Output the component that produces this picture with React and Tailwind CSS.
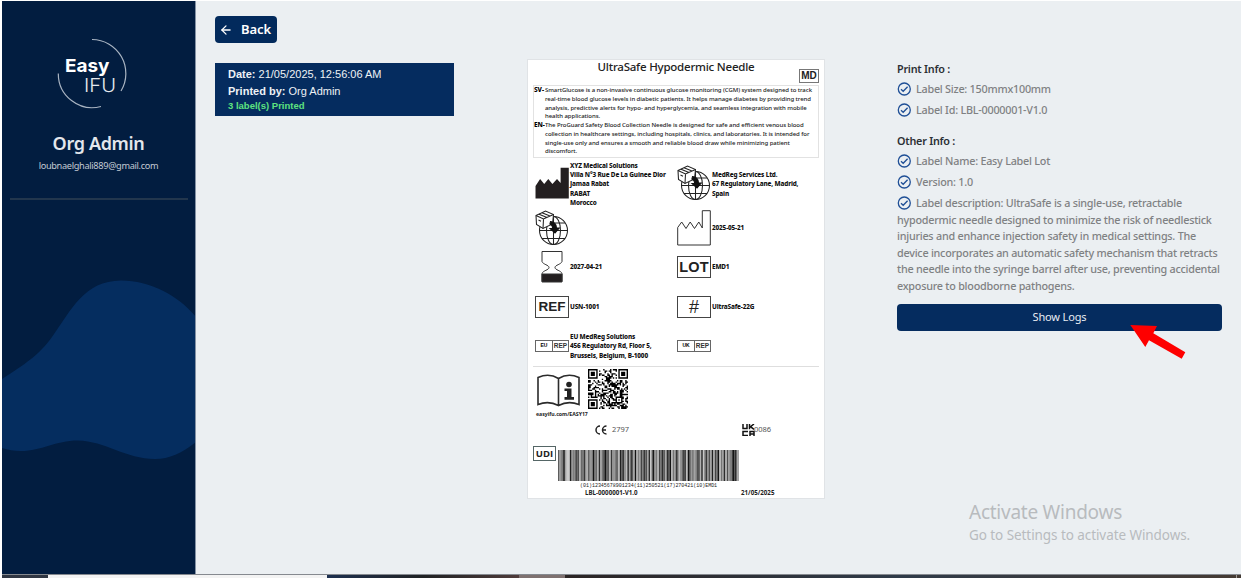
import React from "react";
import { LuArrowLeft } from "react-icons/lu";

function Logo() {
  return (
    <svg width="76" height="76" viewBox="54 35 76 76" fill="none">
      <path d="M92 39.5A34 34 0 0 1 121 91" stroke="#a9b4c2" strokeWidth="1.2" />
      <path d="M58.3 73.5A34 34 0 0 0 101 106.5" stroke="#a9b4c2" strokeWidth="1.2" />
      <text x="65" y="71.5" fontFamily="Inter, sans-serif" fontWeight="700" fontSize="18" textLength="44.5" lengthAdjust="spacingAndGlyphs" fill="#fff">Easy</text>
      <text x="84" y="91.5" fontFamily="Inter, sans-serif" fontWeight="300" fontSize="19" textLength="32" lengthAdjust="spacingAndGlyphs" fill="#e5e9ee">IFU</text>
    </svg>
  );
}

function Sidebar() {
  return (
    <aside className="relative flex w-[194px] shrink-0 flex-col items-center border-r border-[#8492a5] bg-[#021d40]">
      <svg className="absolute left-0 top-[270px]" width="193" height="200" viewBox="2 271 193 200">
        <path d="M2 379C25 364 38 356 52 337C72 309 84 281 121 280.5C151 280.500 180 297 196 317V442C182 453 170 459 155 459C126 459 105 441 78 440.500C55 440.500 42 451 21 451C14 451 8 450 2 448Z" fill="#052d5f" />
      </svg>
      <div className="mt-[34px] mr-[14px] h-[76px]"><Logo /></div>
      <h1 className="mt-[19px] text-[18px] font-semibold leading-[26px] tracking-[-0.35px] whitespace-nowrap text-[#e4e7ec]">Org Admin</h1>
      <p className="mt-[3px] text-[9.2px] leading-[14px] tracking-[-0.32px] whitespace-nowrap text-[#c3cad3]">loubnaelghali889@gmail.com</p>
      <div className="mt-[25px] h-[2px] w-[178px] bg-[#22364d]" />
    </aside>
  );
}

function Factory({ solid }) {
  return solid ? (
    <svg className="-mt-[3px]" width="34" height="32" viewBox="0 0 33.200 32" preserveAspectRatio="none">
      <path d="M.5 31.500V19L5 12l4 5 4-5 4 5 4.500-5 3.500 4V.7h8v30.800Z" fill="#231f20" />
    </svg>
  ) : (
    <svg width="34" height="36" viewBox="0 0 34 36">
      <path d="M.7 35V17.500L4.700 12l4.300 6.500 4.200-6.500 4.300 6.500 4.300-6.500 3.500 6V.7h8V35Z" fill="none" stroke="#333" />
    </svg>
  );
}

function Globe() {
  return (
    <svg width="34" height="36" viewBox="0 0 34 36" fill="none" stroke="#222" strokeWidth="1.050">
      <circle cx="18.500" cy="20.500" r="14" />
      <ellipse cx="18.500" cy="20.500" rx="7" ry="14" />
      <path d="M18.500 6.500v28M4.500 20.500h28M7 13h23M7 28.500h23" />
      <path d="M1 5.500 10.500 1l8 3.500-1 9.500-9.500 4.500-6.500-4Z" fill="#fff" />
      <path d="m1 5.500 7.500 3.500L18.500 4.500M8.500 9 8 18.500M4 4.200l8 3.400M7 2.700l8 3.300M3.500 10l2.500 1.300" />
      <path d="M15.500 11.500c4 .5 6 3 6 6.500h2.800L20 23l-5-4.500h2.700c0-2-.7-3.500-2.800-4.500Z" fill="#111" stroke="#111" />
    </svg>
  );
}

function Hourglass() {
  return (
    <svg width="34" height="34" viewBox="0 0 34 34" fill="none" stroke="#333">
      <path d="M7 1.500h20v10c-1 3-7 3.500-7 6s6 3 7 6v8H7v-8c1-3 7-3.500 7-6s-6-3-7-6Z" />
      <path d="M7 24h20v8H7Z" fill="#231f20" />
    </svg>
  );
}

function Book() {
  return (
    <svg width="43" height="33" viewBox="0 0 43 33" fill="none" stroke="#2b2b2b" strokeWidth="1.600">
      <path d="M1 3.500c8-3.500 14-3 20.500 1 6.500-4 13-4.500 20.500-1v27c-7.500-3-14-2.500-20.500 1-6.500-3.500-13-4-20.500-1ZM21.500 4.500v27" />
      <circle cx="32" cy="10.500" r="2.800" fill="#222" stroke="none" />
      <path d="M27.500 14.500h7v8.500h2.500v2.700h-9.500V23h2.500v-6h-2.500Z" fill="#222" stroke="none" />
    </svg>
  );
}

const QR_SIZE = 29;
function qrModules() {
  const cells = [];
  let seed = 91;
  const finder = (x, y) => {
    const d = Math.max(Math.abs(x - 3), Math.abs(y - 3));
    return d === 3 || d <= 1;
  };
  for (let y = 0; y < QR_SIZE; y++) {
    for (let x = 0; x < QR_SIZE; x++) {
      seed = (seed * 1103515245 + 12345) % 2147483648;
      let on = (seed >> 16) % 100 < 53;
      const fx = x > 20 ? x - 22 : x;
      const fy = y > 20 ? y - 22 : y;
      if ((x < 8 || x > 20) && (y < 8 || y > 20) && !(x > 20 && y > 20)) {
        on = fx >= 0 && fx < 7 && fy >= 0 && fy < 7 && finder(fx, fy);
      }
      const a = Math.max(Math.abs(x - 22), Math.abs(y - 22));
      if (a <= 2) on = a !== 1;
      if (on) cells.push(`M${x} ${y}h1v1h-1z`);
    }
  }
  return cells.join("");
}

function Qr() {
  return (
    <svg width="40" height="40" viewBox="0 0 29 29"><path d={qrModules()} fill="#000" /></svg>
  );
}

const SHADES = "6b933efd0b8735d7739d4b9067c2b83046d39b57d1439e1c26b0d9a4735c2f60b8d3716c240d8b35e9714e03b6c852d0f7395b1c460e8a2d5b94027cf3a81d6049b7e2c5138fd06b49a2c7e305d81b6f94a2d7c038e5b1f";
function Barcode() {
  const n = 120;
  return (
    <svg width="181" height="31" viewBox={`0 0 ${n} 31`} preserveAspectRatio="none">
      {Array.from({ length: n }, (_, i) => {
        const v = Math.round(20 + parseInt(SHADES[i], 16) * 12);
        return <rect key={i} x={i} y="0" width="1.02" height="31" fill={`rgb(${v},${v},${v})`} />;
      })}
    </svg>
  );
}

function Boxed({ children }) {
  return (
    <div className="flex h-[22px] w-[34px] items-center justify-center border border-[#444] font-['Liberation_Sans',sans-serif] text-[13.5px] font-bold leading-none text-[#222]">
      {children}
    </div>
  );
}

function Rep({ region }) {
  return (
    <div className="flex h-[12px] w-[34px] border border-[#666] font-['Liberation_Sans',sans-serif] font-bold text-[#333]">
      <span className="flex w-[17px] items-start justify-center border-r border-[#666] pt-[1.500px] text-[5px] leading-[5px] text-black">{region}</span>
      <span className="flex flex-1 items-center justify-center text-[6.500px] leading-none">REP</span>
    </div>
  );
}

function Cell({ icon, lines = [] }) {
  return (
    <div className="flex items-center">
      <div className="flex w-[34px] shrink-0 justify-center">{icon}</div>
      <div className="ml-[1px] text-[6.400px] font-extrabold leading-[9.300px] tracking-[-0.160px] whitespace-nowrap text-[#111]">
        {lines.map((l) => <div key={l}>{l}</div>)}
      </div>
    </div>
  );
}

function Para({ code, lines }) {
  return (
    <div className="flex">
      <b className="w-[11px] shrink-0 text-[6.500px] font-extrabold text-black">{code}-</b>
      <div className="whitespace-nowrap">{lines.map((l) => <div key={l}>{l}</div>)}</div>
    </div>
  );
}

function Label() {
  return (
    <section className="flex h-[440px] w-[298px] flex-col border border-[#e0e3e6] bg-white px-[5px]">
      <div className="flex h-[25px] justify-end">
        <h2 className="-mt-px w-[200px] text-center text-[11.500px] font-medium leading-[16px] tracking-[-0.220px] whitespace-nowrap text-[#222]">UltraSafe Hypodermic Needle</h2>
        <div className="ml-[23px] mt-[9px] flex h-[14px] w-[20px] items-center justify-center border border-[#777] font-['Liberation_Sans',sans-serif] text-[10px] font-bold leading-none text-[#222]">MD</div>
      </div>
      <div className="h-[73px] border border-[#e2e2e2] text-[6px] font-medium leading-[8.750px] tracking-[-0.060px] text-[#222]">
        <Para code="SV" lines={[
          "SmartGlucose is a non-invasive continuous glucose monitoring (CGM) system designed to track",
          "real-time blood glucose levels in diabetic patients. It helps manage diabetes by providing trend",
          "analysis, predictive alerts for hypo- and hyperglycemia, and seamless integration with mobile",
          "health applications.",
        ]} />
        <Para code="EN" lines={[
          "The ProGuard Safety Blood Collection Needle is designed for safe and efficient venous blood",
          "collection in healthcare settings, including hospitals, clinics, and laboratories. It is intended for",
          "single-use only and ensures a smooth and reliable blood draw while minimizing patient",
          "discomfort.",
        ]} />
      </div>
      <div className="grid grid-cols-[142px_1fr] grid-rows-[50px_38px_40px_40px_38px] pl-[2px] pt-[1px]">
        <Cell icon={<Factory solid />} lines={["XYZ Medical Solutions", "Villa N°3 Rue De La Guinee Dior", "Jamaa Rabat", "RABAT", "Morocco"]} />
        <Cell icon={<div className="-mt-[3px]"><Globe /></div>} lines={["MedReg Services Ltd.", "67 Regulatory Lane, Madrid,", "Spain"]} />
        <Cell icon={<Globe />} />
        <Cell icon={<Factory />} lines={["2025-05-21"]} />
        <Cell icon={<Hourglass />} lines={["2027-04-21"]} />
        <Cell icon={<Boxed><span className="text-[14.500px] tracking-[0.200px]">LOT</span></Boxed>} lines={["EMD1"]} />
        <Cell icon={<Boxed>REF</Boxed>} lines={["USN-1001"]} />
        <Cell icon={<Boxed><span className="text-[18px] font-normal">#</span></Boxed>} lines={["UltraSafe-22G"]} />
        <Cell icon={<Rep region="EU" />} lines={["EU MedReg Solutions", "456 Regulatory Rd, Floor 5,", "Brussels, Belgium, B-1000"]} />
        <Cell icon={<Rep region="UK" />} />
      </div>
      <div className="mt-[1px] h-px bg-[#dedede]" />
      <div className="flex h-[42px] pl-[4px] pt-[2px]">
        <div className="mt-[5px]"><Book /></div>
        <div className="ml-[8px]"><Qr /></div>
      </div>
      <div className="h-[10px] pl-[3px] text-[5.200px] font-bold leading-[10px] text-[#222]">easyifu.com/EASY17</div>
      <div className="mt-[4px] flex h-[14px] items-center pl-[62px] text-[7.500px] leading-none text-[#555]">
        <svg width="12" height="10" viewBox="0 0 12 10" fill="none" stroke="#222" strokeWidth="1.500">
          <path d="M5 1A4 4 0 0 0 5 9M11.500 1A4 4 0 0 0 11.500 9M7.500 5h3.500" />
        </svg>
        <span className="ml-[5px] w-[130px]">2797</span>
        <svg width="13" height="12" viewBox="0 0 13 12" fill="none" stroke="#111" strokeWidth="1.500">
          <path d="M1 0v4.500h4V0M7.500 0v5.300M12 0 8.500 2.700 12 5.300M6 7.500H1v4h5M8 12V7.500h4V12M8 10h4" />
        </svg>
        <span className="-ml-px">0086</span>
      </div>
      <div className="mt-[8px] flex h-[38px]">
        <div className="mt-px flex h-[15px] w-[23px] items-center justify-center border border-[#566] font-['Open_Sans',sans-serif] text-[9.500px] font-bold leading-none text-[#222]">UDI</div>
        <div className="ml-[2px] mt-[5px]"><Barcode /></div>
      </div>
      <div className="pl-[47px] font-['Liberation_Mono',monospace] text-[5px] leading-[6px] tracking-[-0.020px] whitespace-nowrap text-[#222]">(01)12345678901234(11)250521(17)270421(10)EMD1</div>
      <div className="flex pl-[52px] text-[6.200px] font-bold leading-[8px] text-[#222]">
        <span className="w-[156px]">LBL-0000001-V1.0</span>
        <span>21/05/2025</span>
      </div>
    </section>
  );
}

function Check() {
  return (
    <svg className="mr-[5px] inline-block shrink-0" width="14" height="14" viewBox="0 0 14 14" fill="none" stroke="#1f4f96" strokeWidth="1.300">
      <circle cx="7.300" cy="7" r="6" />
      <path d="m4 7.200 2.200 2.100 4.400-4.600" />
    </svg>
  );
}

function Item({ children }) {
  return <div className="flex h-[20.600px] items-center whitespace-nowrap"><Check />{children}</div>;
}

function Info() {
  return (
    <section className="w-[325px] text-[10.800px] font-medium tracking-[-0.240px] text-[#7f8183]">
      <h3 className="h-[20px] font-semibold leading-[20px] text-[#2c3035]">Print Info :</h3>
      <Item>Label Size: 150mmx100mm</Item>
      <Item>Label Id: LBL-0000001-V1.0</Item>
      <h3 className="mt-[11px] h-[20px] font-semibold leading-[20px] text-[#2c3035]">Other Info :</h3>
      <Item>Label Name: Easy Label Lot</Item>
      <Item>Version: 1.0</Item>
      <Item>Label description: UltraSafe is a single-use, retractable</Item>
      <p className="-mt-px whitespace-nowrap leading-[16.400px]">
        hypodermic needle designed to minimize the risk of needlestick<br />
        injuries and enhance injection safety in medical settings. The<br />
        device incorporates an automatic safety mechanism that retracts<br />
        the needle into the syringe barrel after use, preventing accidental<br />
        exposure to bloodborne pathogens.
      </p>
      <div className="relative mt-[10px]">
        <button className="block h-[27px] w-full rounded-[4px] bg-[#052c5f] text-[11px] font-normal tracking-[-0.150px] text-[#e9edf2]">Show Logs</button>
        <svg className="absolute left-[232px] top-[20px]" width="60" height="36" viewBox="1129 324 60 36">
          <path d="M1130.300 325 1157 326l-3.700 7.300 32 19-3.600 6.400-32.700-18.400-3.700 6.700Z" fill="#fe0000" />
        </svg>
      </div>
    </section>
  );
}

export default function App() {
  return (
    <div className="h-[580px] w-[1245px] overflow-hidden bg-white pl-[2px] pt-px font-['Noto_Sans',sans-serif]">
      <div className="flex h-[573px] w-[1239px] bg-[#ebeff2]">
        <Sidebar />
        <main className="flex pl-[19px]">
          <div className="w-[312px] pt-[15px]">
            <button className="flex h-[27px] w-[62px] items-center rounded-[4px] bg-[#022a5c] pl-[4px] text-[13px] font-semibold tracking-[-0.100px] text-white">
              <LuArrowLeft className="mr-[8px] h-[14px] w-[14px]" strokeWidth={2.200} />Back
            </button>
            <div className="mt-[20px] h-[53px] w-[239px] bg-[#052c5f] pl-[13px] pt-[3px] font-['Liberation_Sans',sans-serif] text-[11px] leading-[17px] text-[#eef2f6]">
              <div><b>Date:</b> 21/05/2025, 12:56:06 AM</div>
              <div><b>Printed by:</b> Org Admin</div>
              <div className="-mt-px text-[9.500px] font-bold leading-[13px] text-[#5ee27f]">3 label(s) Printed</div>
            </div>
          </div>
          <div className="pt-[58px]"><Label /></div>
          <div className="ml-[72px] pt-[58px]">
            <Info />
            <div className="ml-[72px] mt-[167px] text-[#b8bbbe]">
              <div className="text-[19px] leading-[28px] tracking-[-0.250px] whitespace-nowrap">Activate Windows</div>
              <div className="text-[13.500px] leading-[18px] tracking-[-0.070px] whitespace-nowrap">Go to Settings to activate Windows.</div>
            </div>
          </div>
        </main>
      </div>
      <div className="flex h-[4px] w-[1239px] border-t border-[#85898f]">
        <div className="w-[46px] bg-[#303642]" />
        <div className="w-[279px] bg-[#f3f3f3]" />
        <div className="w-[192px] bg-linear-to-r from-[#1d3050] via-[#202224] to-[#4f3c3b]" />
        <div className="w-[46px] bg-[#7e7170]" />
        <div className="flex-1 bg-linear-to-r from-[#2b2525] via-[#2f3b49] to-[#453b34]" />
        <div className="w-px bg-[#a09c98]" />
        <div className="w-[4px] bg-[#453b34]" />
      </div>
    </div>
  );
}
